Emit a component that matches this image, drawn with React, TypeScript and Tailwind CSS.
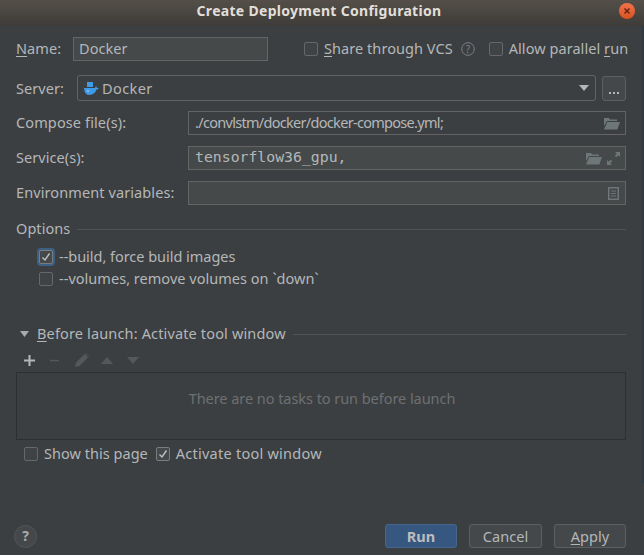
const font = { fontFamily: '"Noto Sans", sans-serif' };
const up = "pb-[2px]";

function Check({ checked, focus, className = "" }: { checked?: boolean; focus?: boolean; className?: string }) {
  return (
    <span
      className={`flex h-[14px] w-[14px] shrink-0 items-center justify-center rounded-[2px] border ${
        checked ? "border-[#7a7d7f] bg-[#45494a]" : "border-[#65686a] bg-[#3f4345]"
      } ${focus ? "shadow-[0_0_0_2px_#3d6185]" : ""} ${className}`}
    >
      {checked && (
        <svg width="10" height="10" viewBox="0 0 10 10" fill="none">
          <path d="M1.5 5.5 L4 8 L8.5 1.5" stroke="#bfc2c4" strokeWidth="1.4" />
        </svg>
      )}
    </span>
  );
}

function Folder() {
  return (
    <svg width="16" height="13" viewBox="0 0 16 13">
      <path d="M0 1h5l1 1.5h7V4H3L0 9z" fill="#6e7678" />
      <path d="M3.2 5H16l-2.6 7.5H0z" fill="#6e7678" />
    </svg>
  );
}

function Field({ label, labelClass = "", children, className = "", bg = "bg-[#3c3f41]" }: { label: string; labelClass?: string; children: React.ReactNode; className?: string; bg?: string }) {
  return (
    <div className={`flex items-center ${className}`}>
      <span className={`w-[172px] shrink-0 ${up} ${labelClass}`}>{label}</span>
      <div className={`flex h-6 flex-1 items-center justify-between border border-[#646464] ${bg} pl-[6px] pr-[5px]`}>{children}</div>
    </div>
  );
}

export default function App() {
  return (
    <div className="relative flex h-[555px] w-[644px] flex-col overflow-hidden bg-[#3c3f41] text-[14.5px] leading-5 tracking-[0.06px] text-[#b4b7b9]" style={font}>
      {/* window behind, showing at the right edge */}
      <div className="absolute right-0 top-[26px] h-[457px] w-[2px] bg-[#303a43]" />

      {/* title bar */}
      <div className="relative flex h-[26px] shrink-0 items-center justify-center bg-gradient-to-b from-[#544f48] to-[#3e3c39] pb-[4px] pr-[6px] text-[14px] font-bold tracking-[0.3px] text-[#e2dfd9]">
        Create Deployment Configuration
        <span className="absolute right-[9px] top-[3px] flex h-4 w-4 items-center justify-center rounded-full bg-gradient-to-b from-[#f2744a] to-[#d9501f]">
          <svg width="8" height="8" viewBox="0 0 8 8"><path d="M1.5 1.5l5 5M6.5 1.5l-5 5" stroke="#5a2410" strokeWidth="1.4" /></svg>
        </span>
      </div>

      <div className="flex flex-1 flex-col pl-4 pr-[18px]">
        {/* name row */}
        <div className="mt-[11px] flex h-6 items-center">
          <span className={`w-[57px] shrink-0 ${up}`}><u className="underline-offset-2">N</u>ame:</span>
          <div className="flex h-6 w-[195px] shrink-0 items-center border border-[#646464] bg-[#45494a] pl-[5px]"><span className={up}>Docker</span></div>
          <Check className="ml-9" />
          <span className={`ml-[6px] whitespace-nowrap ${up}`}><u className="underline-offset-2">S</u>hare through VCS</span>
          <svg className="ml-2 shrink-0" width="14" height="14" viewBox="0 0 14 14" fill="none">
            <circle cx="7" cy="7" r="6.3" stroke="#7c7f81" />
            <text x="7" y="10.5" textAnchor="middle" fontSize="10" fill="#7c7f81">?</text>
          </svg>
          <Check className="ml-[14px]" />
          <span className={`ml-[6px] whitespace-nowrap ${up}`}>Allow parallel <u className="underline-offset-2">r</u>un</span>
        </div>

        {/* server row */}
        <div className="mt-[14px] flex items-center">
          <span className="w-[61px] shrink-0">Server:</span>
          <div className="flex h-[26px] flex-1 items-center justify-between rounded-[3px] border border-[#646464] pl-[6px] pr-[6px]">
            <span className="flex items-center gap-[3px]">
              <svg width="15" height="13" viewBox="0 0 15 13">
                <path d="M3 0h6v5H3z" fill="#3d9be9" />
                <path d="M0 6h11c.3-1 1-1.5 1.6-1.4.2.6.3 1 .1 1.4.6-.2 1.4-.1 2 .3-.5 1-1.4 1.3-2.2 1.3C11.500 11 9 13 5 13 2 13 .300 10 0 6z" fill="#3d9be9" />
                <circle cx="4" cy="9" r=".8" fill="#cfe6fa" />
              </svg>
              <span className="tracking-[0.4px]">Docker</span>
            </span>
            <svg width="10" height="6" viewBox="0 0 10 6"><path d="M0 0h10L5 6z" fill="#b4b7b9" /></svg>
          </div>
          <button className="ml-[6px] flex h-[25px] w-[24px] items-end justify-center rounded-[3px] border border-[#5e6060] bg-[#45484a] pb-[6px]">
            <span className="flex gap-[2px]"><i className="h-[2px] w-[2px] bg-[#b4b7b9]" /><i className="h-[2px] w-[2px] bg-[#b4b7b9]" /><i className="h-[2px] w-[2px] bg-[#b4b7b9]" /></span>
          </button>
        </div>

        <Field label="Compose file(s):" labelClass="tracking-[0.12px]" className="mt-[10px]">
          <span className={`whitespace-nowrap tracking-[-0.7px] ${up}`}>./convlstm/docker/docker-compose.yml;</span>
          <Folder />
        </Field>

        <Field label="Service(s):" className="mt-[11px]" bg="bg-[#45494a]">
          <span className={`whitespace-nowrap text-[14.8px] tracking-normal ${up}`} style={{ fontFamily: '"DejaVu Sans Mono", monospace' }}>tensorflow36_gpu,</span>
          <span className="flex items-center gap-[5px]">
            <Folder />
            <svg width="13" height="13" viewBox="0 0 13 13"><path d="M8 0h5v5l-1.800-1.800-2 2L7.800 3.800l2-2zM5 13H0V8l1.800 1.800 2-2 1.400 1.400-2 2z" fill="#6e7678" /></svg>
          </span>
        </Field>

        <Field label="Environment variables:" labelClass="tracking-[0.1px]" className="mt-[11px]" bg="bg-[#45494a]">
          <span />
          <svg className="mr-[1px]" width="11" height="13" viewBox="0 0 11 13" fill="none">
            <rect x=".75" y=".75" width="9.500" height="11.500" stroke="#6e7678" strokeWidth="1.500" />
            <path d="M3 4h5M3 6.500h5M3 9h5" stroke="#6e7678" />
          </svg>
        </Field>

        {/* options */}
        <div className="mt-[13px] flex items-center gap-[7px]">
          <span className={`whitespace-nowrap ${up}`}>Options</span>
          <div className="h-px flex-1 bg-[#515355]" />
        </div>
        <div className="mt-[6px] flex items-center gap-[6px] pl-[23px]">
          <Check checked focus />
          <span className={`tracking-[-0.03px] ${up}`}>--build, force build images</span>
        </div>
        <div className="flex items-center gap-[6px] pl-[23px]">
          <Check />
          <span className={`tracking-[0.03px] ${up}`}>--volumes, remove volumes on `down`</span>
        </div>

        {/* before launch */}
        <div className="mt-[33px] flex items-center">
          <svg className="ml-[4px] shrink-0" width="9" height="6" viewBox="0 0 9 6"><path d="M0 0h9L4.500 6z" fill="#a8abad" /></svg>
          <span className={`ml-2 whitespace-nowrap tracking-[0.15px] ${up}`}><u className="underline-offset-2">B</u>efore launch: Activate tool window</span>
          <div className="ml-[7px] h-px flex-1 bg-[#515355]" />
        </div>
        <div className="mt-[3px] flex h-[24px] items-center pl-[8px]">
          <svg width="11" height="11" viewBox="0 0 11 11"><path d="M4.500 0h2v4.500H11v2H6.500V11h-2V6.500H0v-2h4.500z" fill="#b4b7b9" /></svg>
          <svg className="ml-[14px]" width="11" height="11" viewBox="0 0 11 11"><path d="M1 4.800h9v1.500H1z" fill="#55585a" /></svg>
          <svg className="ml-[15px]" width="14" height="14" viewBox="0 0 14 14"><path d="M0 14l1-4.500L9.500 1l3.500 3.500L4.500 13zM10.500 0L14 3.500l-.5.500L10 .500z" fill="#55585a" /></svg>
          <svg className="ml-[12px]" width="12" height="7" viewBox="0 0 12 7"><path d="M6 0l6 7H0z" fill="#55585a" /></svg>
          <svg className="ml-[14px]" width="12" height="7" viewBox="0 0 12 7"><path d="M0 0h12L6 7z" fill="#55585a" /></svg>
        </div>
        <div className="flex h-[68px] justify-center border border-[#2f2f2f] pl-[2px] pt-[15px] tracking-[-0.05px] text-[#6d7072]">
          There are no tasks to run before launch
        </div>
        <div className="mt-[3px] flex items-center pl-2">
          <Check />
          <span className={`ml-[6px] tracking-[0.03px] ${up}`}>Show this page</span>
          <Check checked className="ml-2" />
          <span className={`ml-[6px] tracking-[0.25px] ${up}`}>Activate tool window</span>
        </div>

        {/* footer */}
        <div className="mt-auto mb-[7px] flex items-center">
          <span className="-ml-[2px] flex h-[23px] w-[23px] items-center justify-center rounded-full border border-[#535658] bg-[#45484a] text-[14px] font-bold text-[#a9acae]">?</span>
          <div className="ml-auto flex gap-3">
            <button className="h-6 w-[72px] rounded-[3px] border border-[#43688c] bg-[#365880] font-bold text-[#bbbdbf]"><span className={up}>Run</span></button>
            <button className="h-6 w-[73px] rounded-[3px] border border-[#5e6060] bg-[#45484a]"><span className={up}>Cancel</span></button>
            <button className="h-6 w-[72px] rounded-[3px] border border-[#5e6060] bg-[#45484a]"><span className={up}><u className="underline-offset-2">A</u>pply</span></button>
          </div>
        </div>
      </div>
    </div>
  );
}
